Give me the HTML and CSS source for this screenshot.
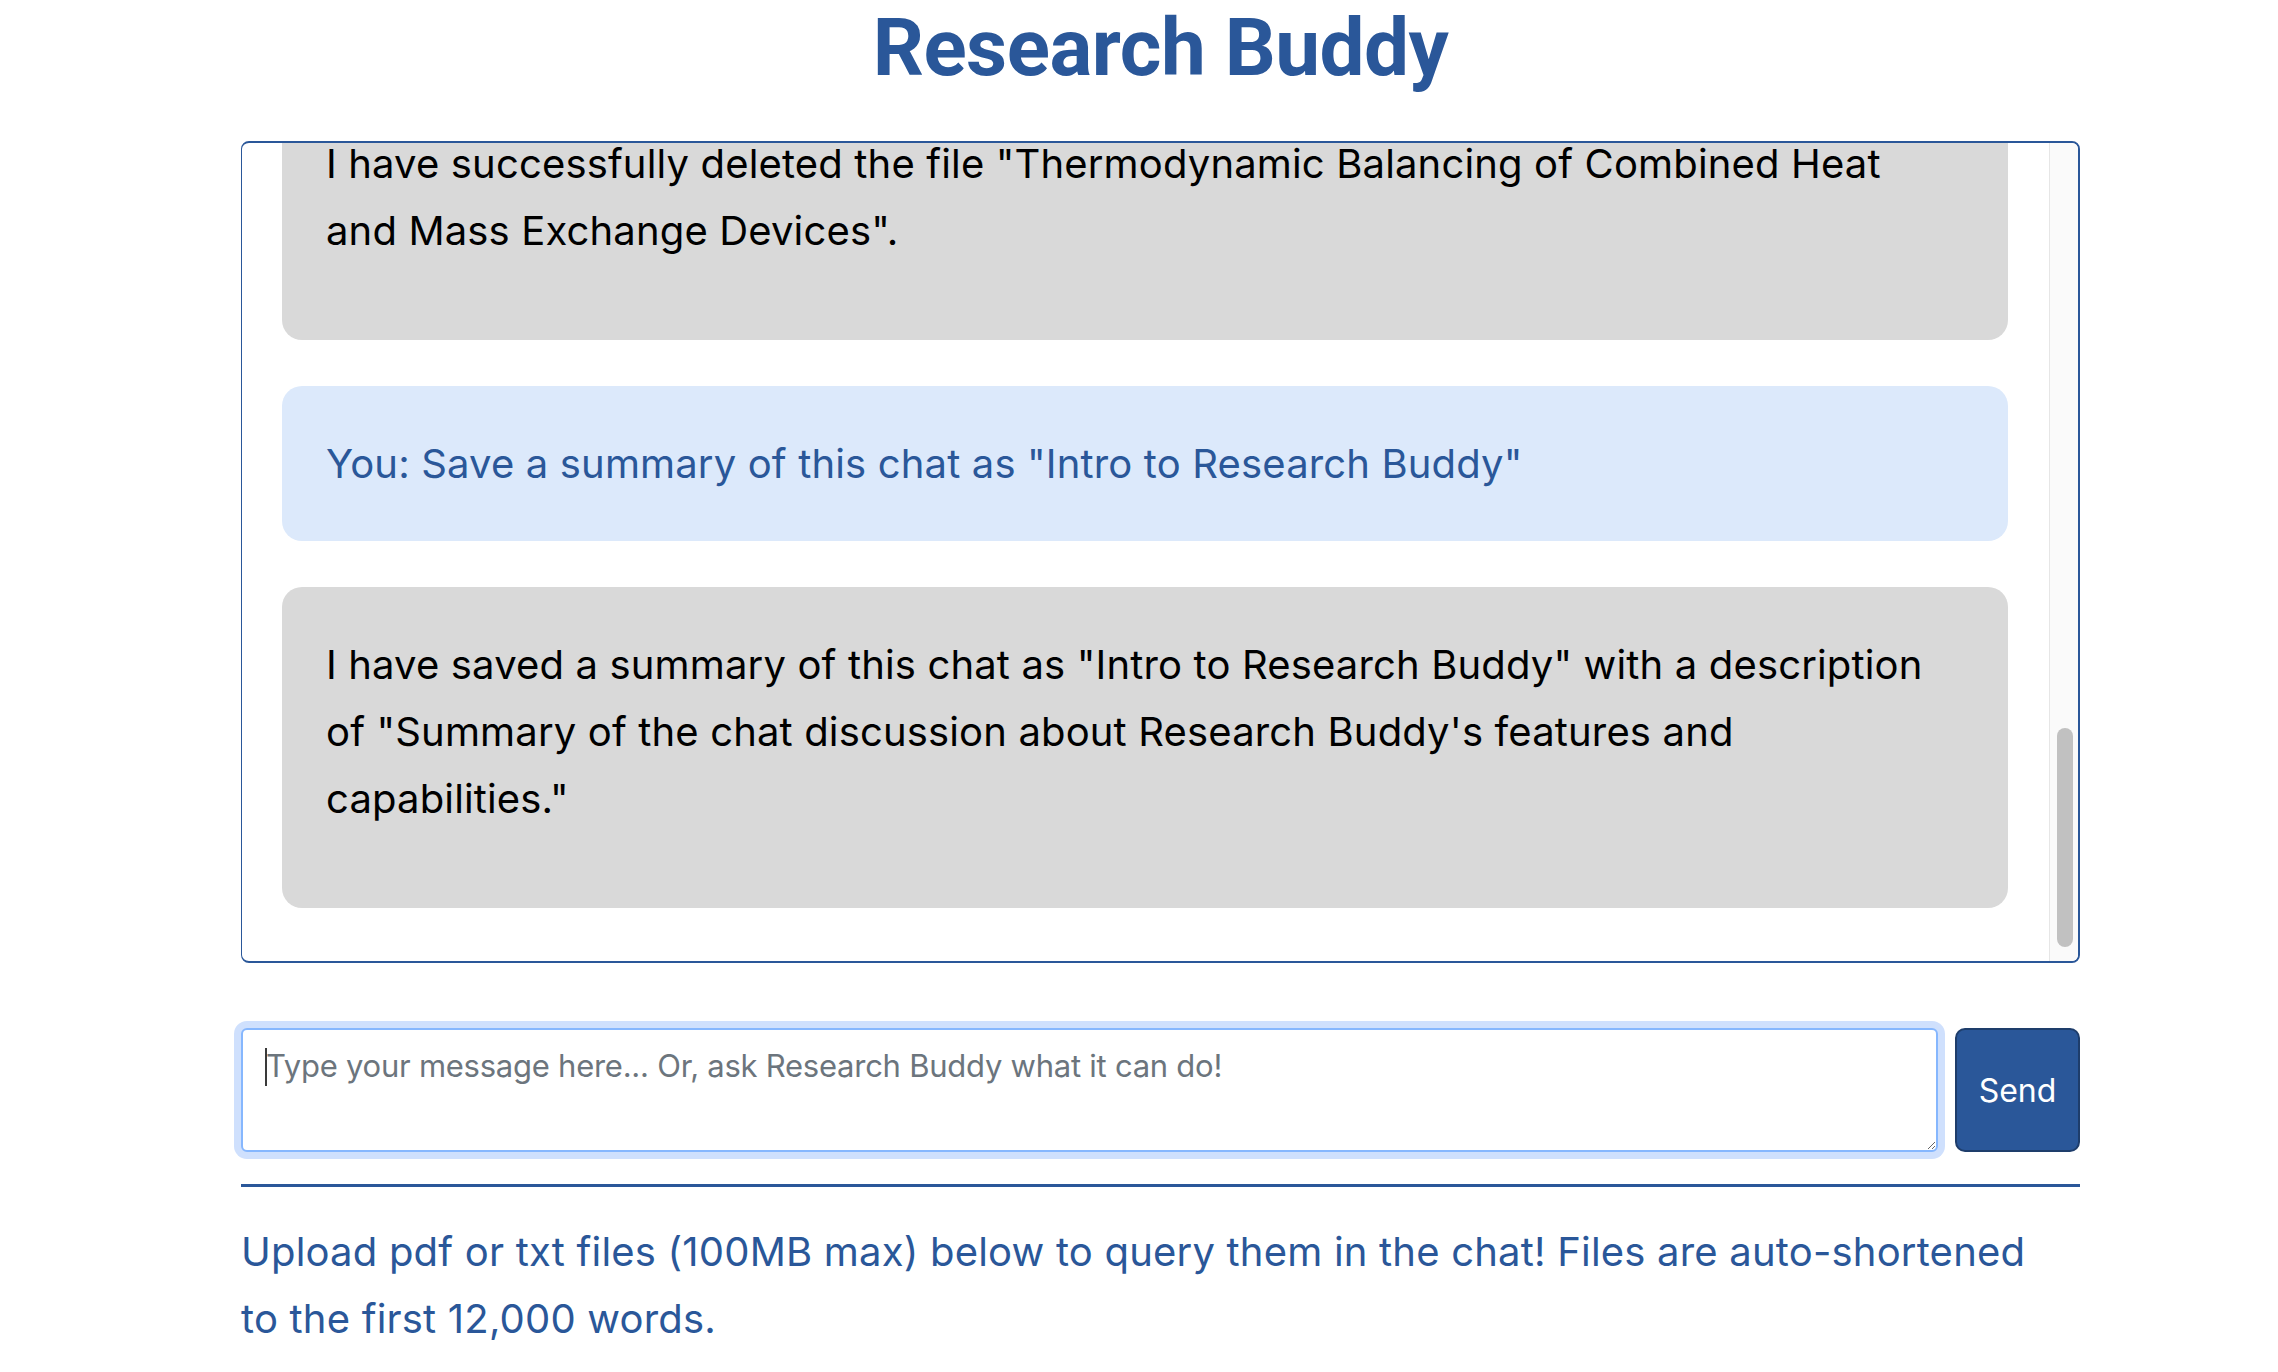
FILE: index.html
```html
<!DOCTYPE html>
<html lang="en">
<head>
<meta charset="utf-8">
<title>Research Buddy</title>
<link rel="stylesheet" href="styles.css">
</head>
<body>
<main class="app">
  <h1 class="title">Research Buddy</h1>

  <section class="chat">
    <div class="chat-viewport">
      <div class="chat-log">
        <div class="msg msg-user">You: Hi! What can you do?</div>
        <div class="msg msg-bot">
          <p>Hi! I'm Research Buddy, your research assistant. I can answer questions about the files you upload, list and delete them, and save summaries of our chats.</p>
        </div>
        <div class="msg msg-user">You: Delete the file "Thermodynamic Balancing of Combined Heat and Mass Exchange Devices"</div>
        <div class="msg msg-bot">
          <p>I have successfully deleted the file "Thermodynamic Balancing of Combined Heat and Mass Exchange Devices".</p>
        </div>
        <div class="msg msg-user">You: Save a summary of this chat as "Intro to Research Buddy"</div>
        <div class="msg msg-bot">
          <p>I have saved a summary of this chat as "Intro to Research Buddy" with a description of "Summary of the chat discussion about Research Buddy's features and capabilities."</p>
        </div>
      </div>
    </div>
    <div class="chat-scrollbar">
      <div class="chat-scrollbar-thumb"></div>
    </div>
  </section>

  <form class="composer">
    <div class="composer-field">
      <textarea class="composer-input" placeholder="Type your message here... Or, ask Research Buddy what it can do!" autofocus></textarea>
    </div>
    <button class="send-btn" type="button">Send</button>
  </form>

  <hr class="divider">

  <p class="upload-note">Upload pdf or txt files (100MB max) below to query them in the chat! Files are auto-shortened to the first 12,000 words.</p>
</main>
</body>
</html>
```

FILE: styles.css
```css
* {
  box-sizing: border-box;
}

html, body {
  margin: 0;
  background: #ffffff;
}

body {
  font-family: Inter, "Noto Sans", "Liberation Sans", sans-serif;
  color: #000000;
}

.app {
  width: 1839px;
  margin-left: 241px;
}

.title {
  margin: 0 0 45px;
  font-family: Roboto, Inter, "Liberation Sans", sans-serif;
  font-size: 80px;
  font-weight: 700;
  line-height: 96px;
  text-align: center;
  color: #2a5799;
  letter-spacing: -0.5px;
}

.chat {
  display: flex;
  height: 822px;
  border: 2px solid #2a5799;
  border-left-width: 1.5px;
  border-radius: 8px;
  overflow: hidden;
}

.chat-viewport {
  flex: 1;
  min-width: 0;
  overflow: hidden;
  display: flex;
  flex-direction: column-reverse;
}

.chat-log {
  flex-shrink: 0;
  display: flex;
  flex-direction: column;
  gap: 46px;
  padding: 40px 41px 53px 40px;
}

.chat-scrollbar {
  flex: 0 0 29px;
  display: flex;
  flex-direction: column;
  justify-content: flex-end;
  padding: 0 5px 14px 7px;
  background: #fafafa;
  border-left: 1px solid #e6e6e6;
}

.chat-scrollbar-thumb {
  width: 16px;
  height: 219px;
  border-radius: 8px;
  background: #c1c1c1;
}

.msg {
  border-radius: 20px;
  padding: 44px 50px 44px 44px;
  font-size: 40px;
  line-height: 67px;
  letter-spacing: 0.15px;
}

.msg p {
  margin: 0 0 32px;
}

.msg-bot {
  background: #d9d9d9;
  color: #000000;
}

.msg-user {
  background: #dce9fb;
  color: #2a5799;
}

.composer {
  display: flex;
  gap: 17px;
  margin: 65px 0 0;
}

.composer-field {
  position: relative;
  flex: 1;
  display: flex;
}

.composer-field::after {
  content: "";
  position: absolute;
  left: 24px;
  top: 20px;
  width: 2px;
  height: 38px;
  background: #3a3a3a;
}

.composer-input {
  flex: 1;
  height: 124px;
  padding: 12px 23px;
  border: 2px solid #86b7fe;
  border-radius: 6px;
  box-shadow: 0 0 0 7px #cfe0fd;
  outline: none;
  font-family: Inter, "Noto Sans", sans-serif;
  font-size: 31px;
  letter-spacing: -0.25px;
  line-height: 48px;
  color: #212529;
  resize: vertical;
}

.composer-input::placeholder {
  color: #6c757d;
}

.send-btn {
  width: 125px;
  height: 124px;
  border: 2px solid #1e3d6b;
  border-radius: 10px;
  background: #2a5799;
  color: #ffffff;
  font-family: Inter, "Noto Sans", sans-serif;
  font-size: 32px;
}

.divider {
  margin: 32px 0 0;
  border: 0;
  border-top: 3px solid #2a5799;
  opacity: 1;
}

.upload-note {
  margin: 31px 0 0;
  padding-right: 20px;
  font-size: 40px;
  line-height: 67px;
  letter-spacing: 0.2px;
  color: #2a5799;
}
```
